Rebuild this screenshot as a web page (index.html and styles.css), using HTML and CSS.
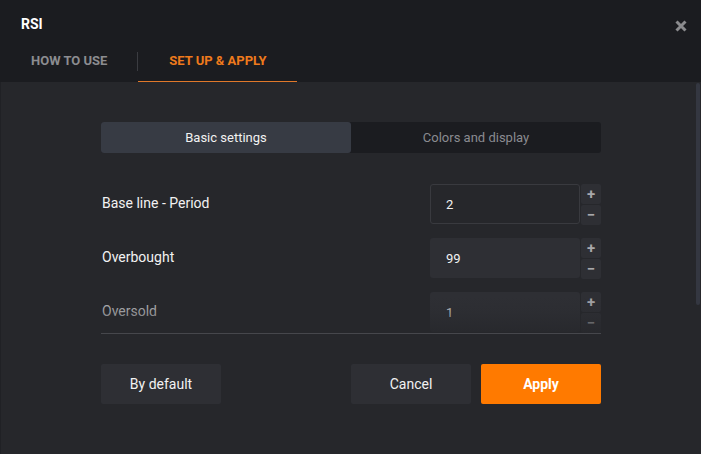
FILE: index.html
```html
<!DOCTYPE html>
<html>
<head>
<meta charset="utf-8">
<link rel="stylesheet" href="styles.css">
</head>
<body>
<div class="dialog">
  <header class="header">
    <div class="title">RSI</div>
    <button class="close" aria-label="Close">
      <svg width="12" height="12" viewBox="0 0 12 12"><path d="M1.5 1.5 L10.5 10.5 M10.5 1.5 L1.5 10.5" stroke="#8b8b8e" stroke-width="3" stroke-linecap="butt"/></svg>
    </button>
    <nav class="tabs">
      <div class="tab">HOW TO USE</div>
      <div class="tab-sep"></div>
      <div class="tab active">SET UP &amp; APPLY</div>
    </nav>
  </header>
  <main class="panel">
    <div class="scroll">
      <div class="segmented">
        <div class="seg active">Basic settings</div>
        <div class="seg">Colors and display</div>
      </div>
      <div class="rows">
        <div class="row">
          <div class="label">Base line - Period</div>
          <div class="control">
            <div class="input focused">2</div>
            <div class="steps"><div class="step">+</div><div class="step">−</div></div>
          </div>
        </div>
        <div class="row">
          <div class="label">Overbought</div>
          <div class="control">
            <div class="input">99</div>
            <div class="steps"><div class="step">+</div><div class="step">−</div></div>
          </div>
        </div>
        <div class="row">
          <div class="label">Oversold</div>
          <div class="control">
            <div class="input">1</div>
            <div class="steps"><div class="step">+</div><div class="step">−</div></div>
          </div>
        </div>
      </div>
      <div class="fade"></div>
    </div>
    <div class="footer">
      <button class="btn">By default</button>
      <div class="spacer"></div>
      <button class="btn">Cancel</button>
      <button class="btn primary">Apply</button>
    </div>
    <div class="thumb"></div>
  </main>
</div>
</body>
</html>
```

FILE: styles.css
```css
* { box-sizing: border-box; }
html, body {
  margin: 0;
  padding: 0;
  width: 701px;
  height: 454px;
  overflow: hidden;
  background: #26272b;
  font-family: Roboto, "Liberation Sans", sans-serif;
}
.dialog {
  width: 701px;
  height: 454px;
  display: flex;
  flex-direction: column;
}
.header {
  position: relative;
  background: #1b1c20;
  height: 82px;
  padding-top: 14px;
}
.title {
  padding-left: 21px;
  height: 20px;
  line-height: 20px;
  font-size: 14px;
  font-weight: 700;
  color: #ffffff;
}
.close {
  position: absolute;
  right: 14px;
  top: 20px;
  width: 12px;
  height: 12px;
  padding: 0;
  border: 0;
  background: none;
  display: block;
}
.close svg { display: block; }
.tabs {
  display: flex;
  align-items: center;
  margin-top: 3px;
  height: 45px;
}
.tab {
  height: 45px;
  line-height: 47px;
  font-size: 13px;
  font-weight: 700;
  color: #8c8c90;
  padding: 0 30px 0 31px;
  border-bottom: 2px solid transparent;
}
.tab.active {
  color: #ef7a1c;
  border-bottom: 1px solid #e0782a;
  line-height: 48px;
  width: 159px;
  padding: 0;
  text-align: center;
}
.tab-sep {
  width: 1px;
  height: 19px;
  background: #3b3c41;
  margin-top: 3px;
}
.panel {
  position: relative;
  flex: 1;
  padding: 0 100px 0 100px;
  border-left: 1px solid #202125;
}
.scroll {
  position: relative;
  height: 252px;
  overflow: hidden;
  padding-top: 40px;
  border-bottom: 1px solid #46474c;
}
.segmented {
  display: flex;
  height: 31px;
  background: #1b1c20;
  border-radius: 3px;
}
.seg {
  flex: 1;
  display: flex;
  align-items: center;
  justify-content: center;
  font-size: 13px;
  color: #8a8b90;
  border-radius: 3px;
}
.seg.active {
  background: #373b44;
  color: #f2f2f2;
}
.rows {
  margin-top: 31px;
  display: flex;
  flex-direction: column;
  gap: 13px;
}
.row {
  display: flex;
  align-items: center;
  justify-content: space-between;
  height: 41px;
}
.label {
  font-size: 14px;
  color: #f2f2f2;
  padding-left: 1px;
  padding-bottom: 4px;
}
.control {
  display: flex;
  gap: 1px;
  height: 41px;
}
.input {
  width: 150px;
  height: 40px;
  background: #2e2f34;
  border-radius: 3px;
  padding-left: 16px;
  display: flex;
  align-items: center;
  font-size: 13px;
  color: #f2f2f2;
}
.input.focused {
  background: #26272b;
  border: 1px solid #393a3f;
  padding-left: 15px;
}
.steps {
  display: flex;
  flex-direction: column;
  gap: 1px;
}
.step {
  width: 20px;
  height: 20px;
  background: #2e2f34;
  border-radius: 2px;
  color: #a8a8ab;
  font-size: 15px;
  font-weight: 700;
  line-height: 21px;
  text-align: center;
}
.row:nth-child(3) .label { color: #b8b8bb; }
.row:nth-child(3) .input { color: #c8c8cb; }
.fade {
  position: absolute;
  left: 0;
  right: 0;
  bottom: 0;
  height: 36px;
  background: linear-gradient(to bottom, rgba(38,39,43,0) 0%, rgba(38,39,43,0.2) 40%, rgba(38,39,43,0.8) 100%);
  pointer-events: none;
}
.footer {
  display: flex;
  gap: 10px;
  margin-top: 30px;
}
.spacer { flex: 1; }
.btn {
  width: 120px;
  height: 40px;
  border: 0;
  border-radius: 2px;
  background: #2e2f34;
  color: #f2f2f2;
  font-family: Roboto, "Liberation Sans", sans-serif;
  font-size: 14px;
}
.btn.primary {
  background: #ff7a00;
  color: #ffffff;
  font-weight: 700;
}
.thumb {
  position: absolute;
  right: 1px;
  top: 1px;
  width: 4px;
  height: 222px;
  border-radius: 2px;
  background: #343741;
}
```
